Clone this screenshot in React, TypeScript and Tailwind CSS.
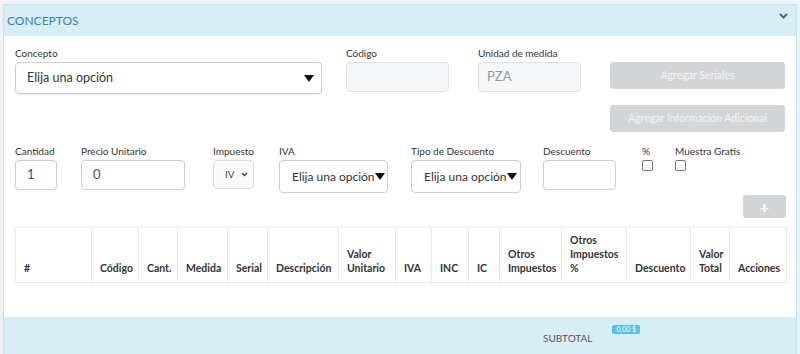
import React from 'react'

const Label = ({ children }: { children: React.ReactNode }) => (
  <div className="text-[10px] leading-[14px] text-[#333] mb-[2px] whitespace-nowrap">{children}</div>
)

const Caret = () => (
  <svg width="10" height="7" viewBox="0 0 10 7" className="shrink-0">
    <path d="M0 0 L10 0 L5 7 Z" fill="#111" />
  </svg>
)

const columns: { w: number; lines: string[] }[] = [
  { w: 76, lines: ['#'] },
  { w: 47, lines: ['Código'] },
  { w: 39, lines: ['Cant.'] },
  { w: 50, lines: ['Medida'] },
  { w: 40, lines: ['Serial'] },
  { w: 71, lines: ['Descripción'] },
  { w: 57, lines: ['Valor', 'Unitario'] },
  { w: 36, lines: ['IVA'] },
  { w: 37, lines: ['INC'] },
  { w: 31, lines: ['IC'] },
  { w: 62, lines: ['Otros', 'Impuestos'] },
  { w: 65, lines: ['Otros', 'Impuestos', '%'] },
  { w: 64, lines: ['Descuento'] },
  { w: 39, lines: ['Valor', 'Total'] },
  { w: 57, lines: ['Acciones'] },
]

export default function App() {
  return (
    <div className="w-[800px] h-[354px] overflow-hidden bg-[#eef2f4] pt-[4px] pl-[3px] pr-[3px] font-['Lato','Noto_Sans',sans-serif]">
      <div className="border border-[#bce8f1] bg-white">
        {/* header */}
        <div className="h-[31px] bg-[#d9edf7] flex items-center justify-between pl-[3px] pr-[8px]">
          <span className="text-[12px] text-[#3b82ad]">CONCEPTOS</span>
          <svg width="9" height="6" viewBox="0 0 9 6" className="mb-[10px]">
            <path d="M1 1 L4.5 4.5 L8 1" fill="none" stroke="#31708f" strokeWidth="2" />
          </svg>
        </div>

        {/* body */}
        <div className="pl-[11px] pt-[10px] h-[281px]">
          <div className="flex items-start">
            <div className="w-[307px]">
              <Label>Concepto</Label>
              <div className="h-[32px] border border-[#ccc] rounded-[4px] flex items-center justify-between pl-[11px] pr-[7px] shadow-[0_1px_1px_rgba(0,0,0,0.08)]">
                <span className="text-[12.5px] text-[#333]">Elija una opción</span>
                <Caret />
              </div>
            </div>
            <div className="w-[103px] ml-[24px]">
              <Label>Código</Label>
              <div className="h-[30px] border border-[#dfe3e5] rounded-[4px] bg-[#f4f6f7]" />
            </div>
            <div className="w-[103px] ml-[29px]">
              <Label>Unidad de medida</Label>
              <div className="h-[30px] border border-[#dfe3e5] rounded-[4px] bg-[#f4f6f7] flex items-center pl-[8px] text-[13px] text-[#999]">PZA</div>
            </div>
            <div className="w-[175px] ml-[29px] pt-[16px] flex flex-col gap-[16px]">
              <div className="h-[27px] rounded-[3px] bg-[#d3d6d9] flex items-center justify-center text-[10.5px] text-[#f2f3f4]">Agregar Seriales</div>
              <div className="h-[27px] rounded-[3px] bg-[#d3d6d9] flex items-center justify-center text-[10.5px] text-[#f2f3f4]">Agregar Información Adicional</div>
            </div>
          </div>

          <div className="flex items-start mt-[12px]">
            <div className="w-[42px]">
              <Label>Cantidad</Label>
              <div className="h-[30px] border border-[#ccc] rounded-[4px] flex items-center pl-[11px] text-[13px] text-[#3d4f63]">1</div>
            </div>
            <div className="w-[104px] ml-[24px]">
              <Label>Precio Unitario</Label>
              <div className="h-[30px] border border-[#ccc] rounded-[4px] flex items-center pl-[11px] text-[13px] text-[#3d4f63]">0</div>
            </div>
            <div className="w-[41px] ml-[28px]">
              <Label>Impuesto</Label>
              <div className="h-[29px] mt-[1px] border border-[#dcdcdc] rounded-[4px] bg-[#fafafa] flex items-center pl-[11px] gap-[6px]">
                <span className="text-[10px] text-[#444] whitespace-nowrap">IV</span>
                <svg width="7" height="5" viewBox="0 0 7 5">
                  <path d="M1 1 L3.5 3.5 L6 1" fill="none" stroke="#444" strokeWidth="1.3" />
                </svg>
              </div>
            </div>
            <div className="w-[109px] ml-[25px]">
              <Label>IVA</Label>
              <div className="h-[33px] border border-[#ccc] rounded-[4px] flex items-center pl-[12px] whitespace-nowrap">
                <span className="text-[12px] text-[#333]">Elija una opción</span>
                <Caret />
              </div>
            </div>
            <div className="w-[110px] ml-[23px]">
              <Label>Tipo de Descuento</Label>
              <div className="h-[33px] border border-[#ccc] rounded-[4px] flex items-center pl-[12px] whitespace-nowrap">
                <span className="text-[12px] text-[#333]">Elija una opción</span>
                <Caret />
              </div>
            </div>
            <div className="w-[73px] ml-[22px]">
              <Label>Descuento</Label>
              <div className="h-[30px] border border-[#ccc] rounded-[4px]" />
            </div>
            <div className="ml-[26px]">
              <Label>%</Label>
              <div className="w-[11px] h-[11px] mt-[2px] border border-[#777] rounded-[2px]" />
            </div>
            <div className="ml-[22px]">
              <Label>Muestra Gratis</Label>
              <div className="w-[11px] h-[11px] mt-[2px] border border-[#777] rounded-[2px]" />
            </div>
          </div>

          <div className="flex justify-end w-[771px] mt-[2px]">
            <div className="w-[43px] h-[23px] rounded-[3px] bg-[#d3d6d9] flex items-center justify-center text-white text-[16px] font-bold leading-none">+</div>
          </div>

          <table className="mt-[9px] table-fixed border-collapse w-[771px]">
            <colgroup>
              {columns.map((c, i) => (
                <col key={i} style={{ width: c.w }} />
              ))}
            </colgroup>
            <thead>
              <tr>
                {columns.map((c, i) => (
                  <th
                    key={i}
                    className="border border-[#e8e8e8] align-bottom text-left font-bold text-[10.5px] leading-[14px] text-[#333] px-[8px] pt-[5px] pb-[7px] whitespace-nowrap"
                  >
                    {c.lines.map((l, j) => (
                      <div key={j}>{l}</div>
                    ))}
                  </th>
                ))}
              </tr>
            </thead>
          </table>
        </div>

        {/* footer */}
        <div className="h-[40px] bg-[#d9edf7] flex items-start pl-[539px] pt-[8px]">
          <span className="mt-[6px] text-[10px] text-[#555]">SUBTOTAL</span>
          <span className="ml-[20px] h-[9px] px-[4px] rounded-[2px] bg-[#5bc0de] text-white text-[7px] leading-[9px]">0.00 $</span>
        </div>
      </div>
    </div>
  )
}
